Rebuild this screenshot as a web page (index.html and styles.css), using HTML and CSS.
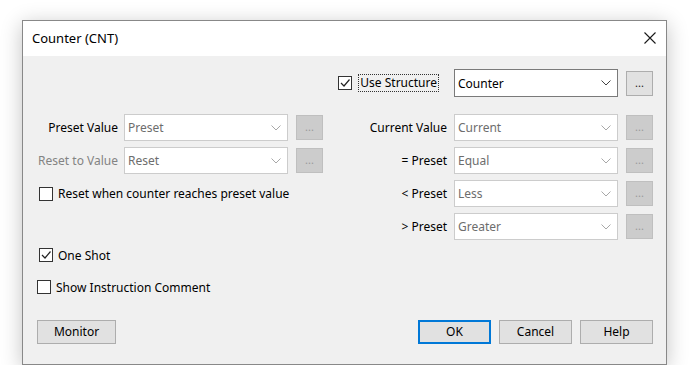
FILE: index.html
```html
<!DOCTYPE html>
<html lang="en">
<head>
    <meta charset="UTF-8">
    <title>Counter (CNT)</title>
    <link rel="stylesheet" href="styles.css">
</head>
<body>
    <div class="dialog">
        <div class="titlebar">
            <span class="title">Counter (CNT)</span>
            <span class="close">
                <svg width="12" height="12" viewBox="0 0 12 12"><path d="M0.5 0.5 L11.5 11.5 M11.5 0.5 L0.5 11.5" stroke="#1a1a1a" stroke-width="1.1" fill="none"/></svg>
            </span>
        </div>

        <div class="content">
            <!-- Structure selection -->
            <div class="top-row">
                <div class="check">
                    <span class="box"><svg width="12" height="12" viewBox="0 0 12 12"><path d="M2 6 L5 9 L10.5 2.5" stroke="#222" stroke-width="1.2" fill="none"/></svg></span>
                    <span class="focus">Use Structure</span>
                </div>
                <div class="combo tall">
                    <span>Counter</span>
                    <svg class="chev" width="10" height="6" viewBox="0 0 10 6"><path d="M0.5 0.5 L5 5 L9.5 0.5" stroke="#444" fill="none"/></svg>
                </div>
                <div class="dots">...</div>
            </div>

            <!-- Values -->
            <div class="fields">
                <div class="label">Preset Value</div>
                <div class="combo off"><span>Preset</span><svg class="chev" width="10" height="6" viewBox="0 0 10 6"><path d="M0.5 0.5 L5 5 L9.5 0.5" stroke="#a8a8a8" fill="none"/></svg></div>
                <div class="dots off">...</div>
                <div></div>
                <div class="label">Current Value</div>
                <div class="combo off"><span>Current</span><svg class="chev" width="10" height="6" viewBox="0 0 10 6"><path d="M0.5 0.5 L5 5 L9.5 0.5" stroke="#a8a8a8" fill="none"/></svg></div>
                <div class="dots off">...</div>

                <div class="label grey">Reset to Value</div>
                <div class="combo off"><span>Reset</span><svg class="chev" width="10" height="6" viewBox="0 0 10 6"><path d="M0.5 0.5 L5 5 L9.5 0.5" stroke="#a8a8a8" fill="none"/></svg></div>
                <div class="dots off">...</div>
                <div></div>
                <div class="label">= Preset</div>
                <div class="combo off"><span>Equal</span><svg class="chev" width="10" height="6" viewBox="0 0 10 6"><path d="M0.5 0.5 L5 5 L9.5 0.5" stroke="#a8a8a8" fill="none"/></svg></div>
                <div class="dots off">...</div>

                <div class="check span3 reset-check"><span class="box"></span><span>Reset when counter reaches preset value</span></div>
                <div></div>
                <div class="label">&lt; Preset</div>
                <div class="combo off"><span>Less</span><svg class="chev" width="10" height="6" viewBox="0 0 10 6"><path d="M0.5 0.5 L5 5 L9.5 0.5" stroke="#a8a8a8" fill="none"/></svg></div>
                <div class="dots off">...</div>

                <div class="span3"></div>
                <div></div>
                <div class="label">&gt; Preset</div>
                <div class="combo off"><span>Greater</span><svg class="chev" width="10" height="6" viewBox="0 0 10 6"><path d="M0.5 0.5 L5 5 L9.5 0.5" stroke="#a8a8a8" fill="none"/></svg></div>
                <div class="dots off">...</div>
            </div>

            <!-- Options -->
            <div class="options">
                <div class="check one-shot">
                    <span class="box"><svg width="12" height="12" viewBox="0 0 12 12"><path d="M2 6 L5 9 L10.5 2.5" stroke="#222" stroke-width="1.2" fill="none"/></svg></span>
                    <span>One Shot</span>
                </div>
                <div class="check">
                    <span class="box"></span>
                    <span>Show Instruction Comment</span>
                </div>
            </div>

            <div class="buttons">
                <div class="btn monitor">Monitor</div>
                <div class="spacer"></div>
                <div class="btn default">OK</div>
                <div class="btn">Cancel</div>
                <div class="btn">Help</div>
            </div>
        </div>
    </div>
</body>
</html>
```

FILE: styles.css
```css
body {
    margin: 0;
    background-color: #fff;
    font-family: "Noto Sans", "Open Sans", sans-serif;
    font-size: 12px;
    color: #000;
}
.dialog {
    width: 643px;
    margin: 20px 0 0 22px;
    border: 1px solid #888;
    background-color: #f0f0f0;
    box-shadow: 0 4px 20px rgba(0, 0, 0, 0.24);
}
.titlebar {
    height: 35px;
    background-color: #fff;
    display: flex;
    align-items: center;
    padding: 0 10px 0 9px;
}
.title {
    flex: 1;
    font-size: 13px;
    padding-bottom: 1px;
}
.close {
    display: flex;
    padding-bottom: 2px;
}
.content {
    padding: 13px 13px 20px 13px;
}
.top-row {
    display: flex;
    justify-content: flex-end;
    align-items: center;
    height: 28px;
}
.top-row .combo {
    margin-left: 16px;
}
.check {
    display: flex;
    align-items: center;
    white-space: nowrap;
}
.box {
    width: 12px;
    height: 12px;
    border: 1px solid #333;
    background-color: #fff;
    margin-right: 5px;
    display: flex;
}
.focus {
    outline: 1px dotted #333;
    padding: 0 1px;
    margin-left: 2px;
    line-height: 16px;
}
.combo {
    width: 162px;
    height: 25px;
    border: 1px solid #7a7a7a;
    background-color: #fff;
    display: flex;
    align-items: center;
    padding: 0;
    box-sizing: content-box;
}
.combo span {
    flex: 1;
    padding-left: 3px;
}
.combo .chev {
    margin-right: 6px;
}
.combo.tall {
    height: 26px;
}
.combo.off {
    border-color: #ccc;
    color: #6d6d6d;
}
.dots {
    width: 25px;
    height: 23px;
    margin-left: 8px;
    border: 1px solid #adadad;
    background-color: #e1e1e1;
    text-align: center;
    line-height: 22px;
    color: #222;
    font-size: 11px;
}
.dots.off {
    border-color: #bfbfbf;
    background-color: #ccc;
    color: #9a9a9a;
}
.fields {
    display: grid;
    grid-template-columns: 88px 164px 35px 1fr auto 164px 35px;
    grid-template-rows: repeat(4, 27px);
    row-gap: 6px;
    margin-top: 17px;
    align-items: center;
}
.label {
    text-align: right;
    padding-right: 7px;
}
.fields > .label:first-child {
    padding-right: 6px;
}
.label.grey {
    color: #838383;
    padding-right: 6px;
}
.span3 {
    grid-column: span 3;
}
.reset-check {
    padding-left: 3px;
}
.options {
    margin-top: 5px;
    display: flex;
    flex-direction: column;
    gap: 12px;
}
.options .check {
    height: 20px;
    padding-left: 1px;
}
.options .one-shot {
    padding-left: 3px;
}
.buttons {
    display: flex;
    margin-top: 23px;
    gap: 8px;
}
.spacer {
    flex: 1;
}
.btn {
    width: 71px;
    height: 22px;
    border: 1px solid #adadad;
    background-color: #e1e1e1;
    text-align: center;
    line-height: 22px;
}
.btn.monitor {
    width: 77px;
    margin-left: 1px;
}
.btn.default {
    border-color: #0078d7;
    box-shadow: inset 0 0 0 1px #0078d7;
}
```
